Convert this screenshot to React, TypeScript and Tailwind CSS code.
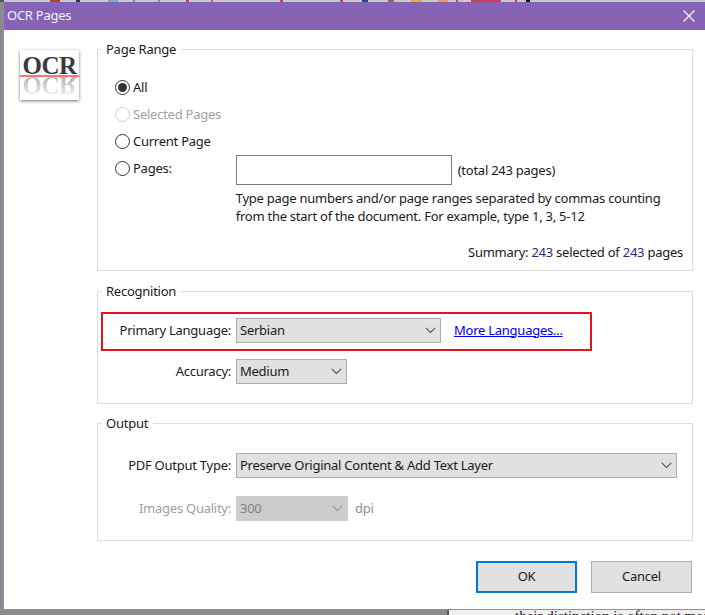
const font = "font-['Noto_Sans',sans-serif]";

const specks = [
  { x: 0, w: 4, c: "#555555" }, { x: 50, w: 10, c: "#c0392b" }, { x: 76, w: 4, c: "#333333" },
  { x: 108, w: 10, c: "#7fa8b8" }, { x: 133, w: 2, c: "#6a8fc0" }, { x: 158, w: 2, c: "#7a8fc0" },
  { x: 186, w: 3, c: "#d04040" }, { x: 211, w: 2, c: "#d06060" }, { x: 280, w: 3, c: "#d04040" },
  { x: 340, w: 3, c: "#d04040" }, { x: 362, w: 6, c: "#2040a0" }, { x: 388, w: 6, c: "#8a7050" },
  { x: 411, w: 11, c: "#e0b030" }, { x: 438, w: 10, c: "#e0a070" }, { x: 456, w: 2, c: "#d04040" },
  { x: 471, w: 30, c: "#d04050" }, { x: 515, w: 2, c: "#d04040" }, { x: 526, w: 4, c: "#111111" },
];

function Radio({ label, checked, disabled }: { label: string; checked?: boolean; disabled?: boolean }) {
  return (
    <div className={`flex items-center gap-[3px] ${disabled ? "text-[#a0a0a0]" : "text-[#1a1a1a]"}`}>
      <span className={`flex h-[15px] w-[15px] items-center justify-center rounded-full border bg-white ${disabled ? "border-[#cccccc]" : "border-[#333333]"}`}>
        {checked && <span className="h-[9px] w-[9px] rounded-full bg-[#333333]" />}
      </span>
      <span>{label}</span>
    </div>
  );
}

function Chevron({ color = "#555555" }: { color?: string }) {
  return (
    <svg width="11" height="7" viewBox="0 0 11 7" fill="none" stroke={color} strokeWidth="1.1">
      <path d="M0.8 0.8 L5.5 5.5 L10.2 0.8" />
    </svg>
  );
}

function Select({ value, width, disabled }: { value: string; width: string; disabled?: boolean }) {
  return (
    <div className={`flex h-[25px] items-center justify-between border pl-[3px] pr-[4px] ${width} ${disabled ? "border-[#cccccc] bg-[#cccccc] text-[#808080]" : "border-[#adadad] bg-[#e1e1e1] text-[#1a1a1a]"}`}>
      <span>{value}</span>
      <Chevron color={disabled ? "#999999" : "#555555"} />
    </div>
  );
}

function Group({ title, className, children }: { title: string; className: string; children: React.ReactNode }) {
  return (
    <fieldset className={`w-[596px] border border-[#dcdcdc] ${className}`}>
      <legend className="ml-[3px] px-[5px] leading-[19px] text-[#1a1a1a]">{title}</legend>
      {children}
    </fieldset>
  );
}

function OcrLogo() {
  return (
    <div className="mt-[20px] flex h-[50px] w-[59px] flex-col items-center overflow-hidden bg-white font-['Liberation_Serif',serif] shadow-[0_1px_3px_rgba(0,0,0,0.55)]">
      <div className="h-[25px] overflow-hidden pt-[3px] text-[25px] font-bold leading-[25px] tracking-[-0.5px] text-[#3a3a3a]">OCR</div>
      <div className="h-[2px] w-full shrink-0 bg-[#f2757d]" />
      <div className="h-[23px] -scale-y-100 overflow-hidden bg-gradient-to-t from-[#b4b4b4] to-[#ffffff] bg-clip-text pt-[2px] text-[25px] font-bold leading-[25px] tracking-[-0.5px] text-transparent">OCR</div>
    </div>
  );
}

export default function App() {
  return (
    <div className={`flex h-[615px] w-[705px] flex-col overflow-hidden bg-[#8a8a8a] text-[13px] tracking-[-0.25px] ${font}`}>
      <div className="relative h-[2px] shrink-0 bg-[#c9c9c9]">
        {specks.map((s) => (
          <span key={s.x} className="absolute top-0 h-[2px]" style={{ left: s.x, width: s.w, background: s.c }} />
        ))}
      </div>
      <div className="flex h-[608px] w-[705px] shrink-0 pl-[3px]">
        <div className="flex h-[608px] w-[702px] flex-col border-b border-l border-[#9a82c4] bg-white">
          <div className="flex h-[28px] shrink-0 items-center justify-between bg-[#8763b5] pl-[3px] pr-[10px] text-[#f4f0fa]">
            <span>OCR Pages</span>
            <svg width="12" height="12" viewBox="0 0 12 12" stroke="#ffffff" strokeWidth="1.1"><path d="M0.5 0.5 L11.5 11.5 M11.5 0.5 L0.5 11.5" /></svg>
          </div>
          <div className="flex pl-[16px]">
            <OcrLogo />
            <div className="ml-[18px] flex flex-col pt-[10px]">
              <Group title="Page Range" className="h-[231px]">
                <div className="flex flex-col pl-[17px] pt-[19px] leading-[19px]">
                  <Radio label="All" checked />
                  <div className="mt-[8px]"><Radio label="Selected Pages" disabled /></div>
                  <div className="mt-[8px]"><Radio label="Current Page" /></div>
                  <div className="mt-[8px] flex items-start">
                    <Radio label="Pages:" />
                    <div className="ml-[64px] flex flex-col">
                      <div className="-mt-[4px] flex items-center gap-[6px]">
                        <div className="h-[30px] w-[216px] border border-[#7a7a7a]" />
                        <span className="text-[#1a1a1a]">(total 243 pages)</span>
                      </div>
                      <p className="mt-[4px] w-[450px] leading-[18px] text-[#1a1a1a]">Type page numbers and/or page ranges separated by commas counting from the start of the document. For example, type 1, 3, 5-12</p>
                    </div>
                  </div>
                  <div className="mt-[18px] self-end pr-[9px] text-[#1a1a1a]">
                    Summary: <span className="text-[#2d2a7a]">243</span> selected of <span className="text-[#2d2a7a]">243</span> pages
                  </div>
                </div>
              </Group>
              <Group title="Recognition" className="mt-[11px] h-[122px]">
                <div className="relative pt-[17px]">
                  <div className="flex items-center">
                    <span className="w-[133px] text-right text-[#1a1a1a]">Primary Language:</span>
                    <div className="ml-[5px]"><Select value="Serbian" width="w-[205px]" /></div>
                    <span className="ml-[13px] text-[#0000ee] underline">More Languages...</span>
                  </div>
                  <div className="absolute left-[3px] top-[11px] h-[39px] w-[491px] border-2 border-[#e8101c]" />
                  <div className="mt-[16px] flex items-center">
                    <span className="w-[133px] text-right text-[#1a1a1a]">Accuracy:</span>
                    <div className="ml-[5px]"><Select value="Medium" width="w-[111px]" /></div>
                  </div>
                </div>
              </Group>
              <Group title="Output" className="mt-[10px] h-[127px]">
                <div className="pt-[20px]">
                  <div className="flex items-center">
                    <span className="w-[133px] text-right text-[#1a1a1a]">PDF Output Type:</span>
                    <div className="ml-[5px]"><Select value="Preserve Original Content &amp; Add Text Layer" width="w-[441px]" /></div>
                  </div>
                  <div className="mt-[18px] flex items-center">
                    <span className="w-[133px] text-right text-[#a0a0a0]">Images Quality:</span>
                    <div className="ml-[5px]"><Select value="300" width="w-[112px]" disabled /></div>
                    <span className="ml-[7px] text-[#909090]">dpi</span>
                  </div>
                </div>
              </Group>
              <div className="mt-[20px] flex justify-end gap-[14px] pr-[1px]">
                <button className="h-[32px] w-[101px] border-2 border-[#0078d7] bg-[#e1e1e1] text-[#1a1a1a]">OK</button>
                <button className="h-[32px] w-[101px] border border-[#adadad] bg-[#e1e1e1] text-[#1a1a1a]">Cancel</button>
              </div>
            </div>
          </div>
        </div>
      </div>
      <div className="flex h-[5px] shrink-0">
        <div className="w-[447px] bg-[#8a8a8a]" />
        <div className="w-[2px] bg-[#555555]" />
        <div className="flex-1 overflow-hidden bg-[#efefef] pl-[66px] font-['Liberation_Serif',serif] text-[15px] leading-[13px] tracking-normal whitespace-nowrap text-[#222222]">their distinction is often not mea</div>
      </div>
    </div>
  );
}
